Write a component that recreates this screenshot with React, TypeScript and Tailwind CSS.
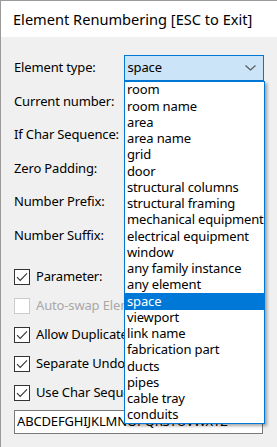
import React from "react";

const fields = [
  "Current number:",
  "If Char Sequence:",
  "Zero Padding:",
  "Number Prefix:",
  "Number Suffix:",
];

const options = [
  { label: "Parameter:", checked: true, disabled: false },
  { label: "Auto-swap Element Numbers", checked: false, disabled: true },
  { label: "Allow Duplicate Numbers", checked: true, disabled: false },
  { label: "Separate Undo Steps", checked: true, disabled: false },
  { label: "Use Char Sequence", checked: true, disabled: false },
];

const elementTypes = [
  "room",
  "room name",
  "area",
  "area name",
  "grid",
  "door",
  "structural columns",
  "structural framing",
  "mechanical equipment",
  "electrical equipment",
  "window",
  "any family instance",
  "any element",
  "space",
  "viewport",
  "link name",
  "fabrication part",
  "ducts",
  "pipes",
  "cable tray",
  "conduits",
];

function CheckBox({ checked, disabled }: { checked: boolean; disabled: boolean }) {
  return (
    <span
      className={`flex h-[16px] w-[16px] shrink-0 items-center justify-center border bg-white ${
        disabled ? "border-[#cccccc]" : "border-[#333333]"
      }`}
    >
      {checked && (
        <svg width="12" height="10" viewBox="0 0 12 10">
          <path d="M1 5.2 L4.2 8.4 L11 1.4" fill="none" stroke="#333333" strokeWidth="1.1" />
        </svg>
      )}
    </span>
  );
}

export default function App() {
  return (
    <div className="relative h-[447px] w-[277px] overflow-hidden border-l border-t border-[#9a9a9a] bg-[#f0f0f0] font-['Noto_Sans',sans-serif] text-[13px] tracking-[-0.15px] text-black">
      {/* Title bar */}
      <div className="flex h-[36px] items-center bg-white pl-[12px] pt-[2px] text-[14.6px] tracking-normal">
        Element Renumbering [ESC to Exit]
      </div>

      <div className="px-[13px] pt-[14px]">
        {/* Element type + combo */}
        <div className="flex h-[33.6px] items-center">
          <span className="w-[110px]">Element type:</span>
          <div className="flex h-[26px] w-[141px] items-center justify-between border border-[#0078d7] bg-[#cce4f7] pl-[3px] pr-[7px]">
            <span>space</span>
            <svg width="11" height="6" viewBox="0 0 11 6">
              <path d="M0.5 0.5 L5.5 5 L10.5 0.5" fill="none" stroke="#555555" strokeWidth="1.1" />
            </svg>
          </div>
        </div>

        {/* text fields, covered by the open list */}
        {fields.map((f) => (
          <div key={f} className="flex h-[33.6px] items-center">
            <span className="w-[110px] overflow-hidden whitespace-nowrap">{f}</span>
            <div className="h-[23px] w-[141px] border border-[#7a7a7a] bg-white" />
          </div>
        ))}

        <div className="mt-[10px]">
          {options.map((o) => (
            <div key={o.label} className="flex h-[29px] items-center gap-[6px]">
              <CheckBox checked={o.checked} disabled={o.disabled} />
              <span
                className={`max-w-[88px] overflow-hidden whitespace-nowrap ${
                  o.disabled ? "text-[#a8a8a8]" : ""
                }`}
              >
                {o.label}
              </span>
            </div>
          ))}
        </div>

        <div className="mt-[2px] flex h-[24px] w-[249px] items-center border border-[#7a7a7a] bg-white px-[2px]">
          ABCDEFGHIJKLMNOPQRSTUVWXYZ
        </div>
      </div>

      {/* Open dropdown list */}
      <ul className="absolute left-[123px] top-[80px] w-[141px] border border-[#0078d7] bg-white shadow-[2px_2px_3px_rgba(0,0,0,0.35)]">
        {elementTypes.map((t) => (
          <li
            key={t}
            className={`flex h-[16.25px] items-center whitespace-nowrap pl-[2px] ${
              t === "space" ? "bg-[#0078d7] text-white" : ""
            }`}
          >
            {t}
          </li>
        ))}
      </ul>
    </div>
  );
}
